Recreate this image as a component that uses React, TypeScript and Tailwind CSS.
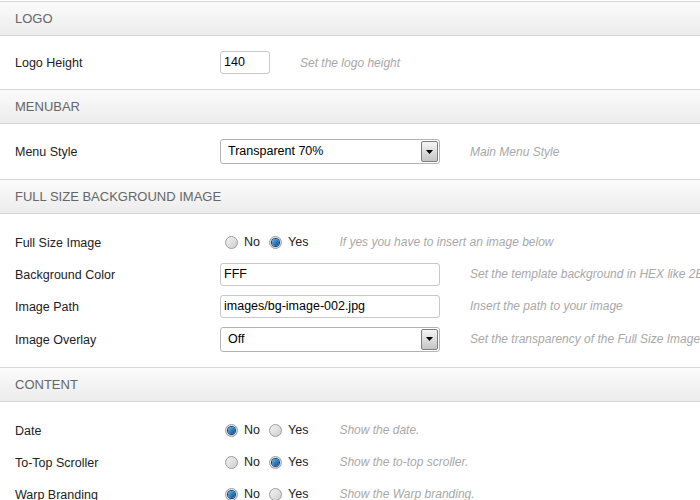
const font = { fontFamily: '"Liberation Sans", Arial, sans-serif' };

const SectionHeader = ({ title }: { title: string }) => (
    <div className="flex h-[35px] items-center border-y border-[#d6d6d6] bg-gradient-to-b from-[#fbfbfb] to-[#ececec] pl-[15px] text-[13px] text-[#666]">
        {title}
    </div>
);

const Row = ({
    label,
    height,
    children,
}: {
    label: string;
    height: string;
    children: React.ReactNode;
}) => (
    <div className={`flex items-center whitespace-nowrap ${height}`}>
        <div className="w-[220px] shrink-0 pl-[15px] pt-[2px] text-[12.5px] text-[#222]">
            {label}
        </div>
        {children}
    </div>
);

const Desc = ({ text, ml }: { text: string; ml: string }) => (
    <span className={`shrink-0 text-[12px] italic text-[#a8a8a8] ${ml}`}>{text}</span>
);

const Radio = ({ checked }: { checked: boolean }) => (
    <span className="flex h-[13px] w-[13px] items-center justify-center rounded-full border border-[#9c9c9c] bg-gradient-to-br from-[#f2f2f2] to-[#cfcfcf]">
        {checked && (
            <span className="h-[7px] w-[7px] rounded-full bg-gradient-to-br from-[#5bb8f0] to-[#0b4a8c] ring-1 ring-[#0a3e74]" />
        )}
    </span>
);

const YesNo = ({ yes }: { yes: boolean }) => (
    <div className="ml-[5px] flex shrink-0 items-center pt-[1px] text-[12.5px] text-[#222]">
        <Radio checked={!yes} />
        <span className="ml-[6px]">No</span>
        <span className="ml-[9px]">
            <Radio checked={yes} />
        </span>
        <span className="ml-[6px]">Yes</span>
    </div>
);

const TextInput = ({ value, width }: { value: string; width: string }) => (
    <div
        className={`flex h-[23px] shrink-0 items-center rounded-[3px] border border-[#c8c8c8] bg-white pl-[3px] text-[12.5px] text-black ${width}`}
    >
        {value}
    </div>
);

const Select = ({ value }: { value: string }) => (
    <div className="flex h-[25px] w-[220px] shrink-0 items-center justify-between rounded-[3px] border border-[#b4b4b4] bg-white pl-[7px] pr-[1px] text-[12.5px] text-black">
        <span>{value}</span>
        <span className="flex h-[21px] w-[17px] items-center justify-center rounded-[2px] border border-[#7d7d7d] bg-gradient-to-b from-[#f6f6f6] to-[#c4c4c4]">
            <svg width="7" height="4" viewBox="0 0 7 4">
                <path d="M0 0h7L3.5 4z" fill="#000" />
            </svg>
        </span>
    </div>
);

const App = () => {
    return (
        <div className="h-[500px] w-[700px] overflow-hidden bg-white pt-[1px]" style={font}>
            <SectionHeader title="LOGO" />
            <div className="py-[15px]">
                <Row label="Logo Height" height="h-[23px]">
                    <TextInput value="140" width="w-[50px]" />
                    <Desc text="Set the logo height" ml="ml-[30px]" />
                </Row>
            </div>

            <SectionHeader title="MENUBAR" />
            <div className="py-[15px]">
                <Row label="Menu Style" height="h-[25px]">
                    <Select value="Transparent 70%" />
                    <Desc text="Main Menu Style" ml="ml-[30px]" />
                </Row>
            </div>

            <SectionHeader title="FULL SIZE BACKGROUND IMAGE" />
            <div className="flex flex-col gap-[6px] pb-[14px] pt-[15px]">
                <Row label="Full Size Image" height="h-[26px]">
                    <YesNo yes={true} />
                    <Desc text="If yes you have to insert an image below" ml="ml-[31px]" />
                </Row>
                <Row label="Background Color" height="h-[26px]">
                    <TextInput value="FFF" width="w-[220px]" />
                    <Desc text="Set the template background in HEX like 2B2B2B" ml="ml-[30px]" />
                </Row>
                <Row label="Image Path" height="h-[26px]">
                    <TextInput value="images/bg-image-002.jpg" width="w-[220px]" />
                    <Desc text="Insert the path to your image" ml="ml-[30px]" />
                </Row>
                <Row label="Image Overlay" height="h-[28px]">
                    <Select value="Off" />
                    <Desc text="Set the transparency of the Full Size Image overlay" ml="ml-[30px]" />
                </Row>
            </div>

            <SectionHeader title="CONTENT" />
            <div className="flex flex-col gap-[6px] pt-[15px]">
                <Row label="Date" height="h-[26px]">
                    <YesNo yes={false} />
                    <Desc text="Show the date." ml="ml-[31px]" />
                </Row>
                <Row label="To-Top Scroller" height="h-[26px]">
                    <YesNo yes={true} />
                    <Desc text="Show the to-top scroller." ml="ml-[31px]" />
                </Row>
                <Row label="Warp Branding" height="h-[26px]">
                    <YesNo yes={false} />
                    <Desc text="Show the Warp branding." ml="ml-[31px]" />
                </Row>
            </div>
        </div>
    );
};

export default App;
